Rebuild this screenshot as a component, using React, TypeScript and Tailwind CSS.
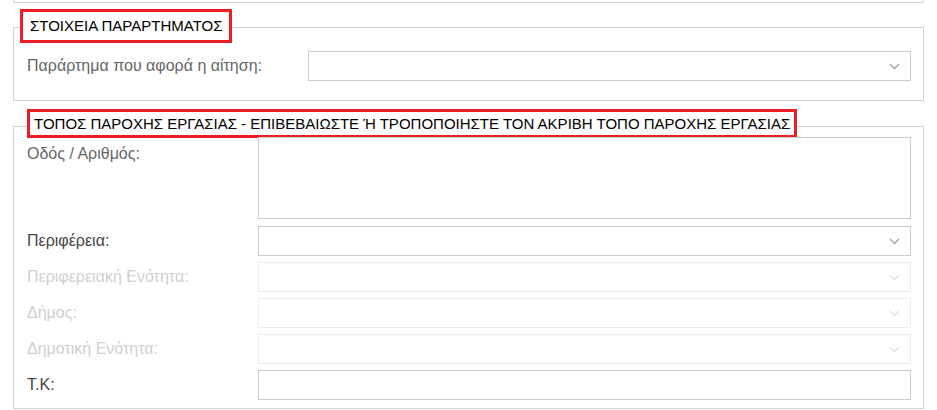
import React from "react";

function Chevron({ disabled }: { disabled?: boolean }) {
  return (
    <svg width="11" height="7" viewBox="0 0 11 7" className="shrink-0">
      <polyline
        points="1,1 5.5,5.5 10,1"
        fill="none"
        stroke={disabled ? "#dedede" : "#a0a0a0"}
        strokeWidth="1.3"
      />
    </svg>
  );
}

function SelectBox({ disabled, className }: { disabled?: boolean; className: string }) {
  return (
    <div
      className={
        "flex items-center justify-end pr-[10px] bg-white border " +
        (disabled ? "border-[#ececec] " : "border-[#cccccc] ") +
        className
      }
    >
      <Chevron disabled={disabled} />
    </div>
  );
}

function Row({ label, disabled, input }: { label: string; disabled?: boolean; input: React.ReactNode }) {
  return (
    <div className="flex items-center">
      <div className={"w-[231px] shrink-0 " + (disabled ? "text-[#cfcfcf]" : "text-[#444444]")}>{label}</div>
      {input}
    </div>
  );
}

export default function App() {
  return (
    <div
      className="w-[937px] h-[410px] overflow-hidden bg-white text-[16px] leading-[20px]"
      style={{ fontFamily: '"Liberation Sans", Arial, sans-serif' }}
    >
      {/* end of the previous section */}
      <div className="ml-[13px] w-[911px] h-[3px] border-x border-b border-[#d2d2d2]" />

      <fieldset className="ml-[13px] mt-[6px] w-[911px] border border-[#d2d2d2]">
        <legend className="ml-[6px] pb-[2px]">
          <span className="block px-[7px] py-[4px] border-[3px] border-[#ee1c25] text-black text-[15px] leading-[20px]">
            ΣΤΟΙΧΕΙΑ ΠΑΡΑΡΤΗΜΑΤΟΣ
          </span>
        </legend>
        <div className="pl-[13px] pr-[12px] pt-[6px] pb-[19px]">
          <div className="flex items-center">
            <div className="w-[281px] shrink-0 text-[#666666]">Παράρτημα που αφορά η αίτηση:</div>
            <SelectBox className="w-[603px] h-[30px]" />
          </div>
        </div>
      </fieldset>

      <fieldset className="ml-[13px] mt-[8px] w-[911px] border border-[#d2d2d2]">
        <legend className="ml-[13px] pb-[6px]">
          <span className="block px-[4px] py-[1px] border-[3px] border-[#ee1c25] text-black text-[15px] leading-[21px]">
            ΤΟΠΟΣ ΠΑΡΟΧΗΣ ΕΡΓΑΣΙΑΣ - ΕΠΙΒΕΒΑΙΩΣΤΕ Ή ΤΡΟΠΟΠΟΙΗΣΤΕ ΤΟΝ ΑΚΡΙΒΗ ΤΟΠΟ ΠΑΡΟΧΗΣ ΕΡΓΑΣΙΑΣ
          </span>
        </legend>
        <div className="pl-[13px] pr-[12px] mt-[-7px] pb-[8px] flex flex-col gap-[6px]">
          <div className="flex items-start mb-[1px]">
            <div className="w-[231px] shrink-0 pt-[7px] text-[#666666]">Οδός / Αριθμός:</div>
            <div className="w-[653px] h-[82px] border border-[#cccccc]" />
          </div>
          <Row label="Περιφέρεια:" input={<SelectBox className="w-[653px] h-[30px]" />} />
          <Row label="Περιφερειακή Ενότητα:" disabled input={<SelectBox disabled className="w-[653px] h-[30px]" />} />
          <Row label="Δήμος:" disabled input={<SelectBox disabled className="w-[653px] h-[30px]" />} />
          <Row label="Δημοτική Ενότητα:" disabled input={<SelectBox disabled className="w-[653px] h-[30px]" />} />
          <Row label="Τ.Κ:" input={<div className="w-[653px] h-[30px] border border-[#cccccc]" />} />
        </div>
      </fieldset>
    </div>
  );
}
